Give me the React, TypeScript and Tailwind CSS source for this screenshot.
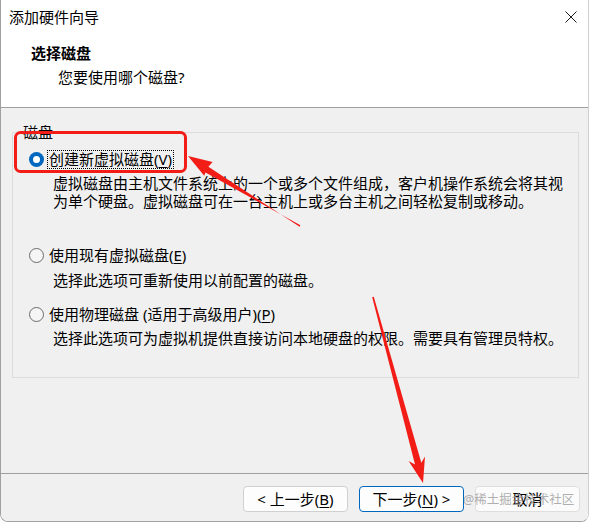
import React from 'react';

function Radio({ checked }: { checked?: boolean }) {
  if (checked) {
    return (
      <span className="w-[15px] h-[15px] rounded-full bg-[#0067c0] flex items-center justify-center shrink-0">
        <span className="w-[7px] h-[7px] rounded-full bg-white" />
      </span>
    );
  }
  return <span className="w-[15px] h-[15px] rounded-full border border-[#6b6b6b] bg-[#f5f5f5] shrink-0" />;
}

function Key({ k }: { k: string }) {
  return <span className="underline underline-offset-[2px] decoration-1">{k}</span>;
}

function Annotations() {
  return (
    <svg className="absolute inset-0 pointer-events-none" width="589" height="522" viewBox="0 0 589 522">
      <rect x="15.5" y="132.5" width="170" height="39" rx="5" fill="none" stroke="#f31d18" strokeWidth="3" />
      {/* arrow pointing at the first option */}
      <polygon
        fill="#f31d18"
        points="300.4,225.3 205.5,172.4 204.2,175.8 188,156 212.6,161.9 208.4,166.8 299.6,226.7"
      />
      {/* arrow pointing at the next button */}
      <polygon
        fill="#f31d18"
        points="372.2,297.2 415.0,464.4 408.6,461.0 423,483 425.0,456.6 421.3,462.7 373.8,296.8"
      />
    </svg>
  );
}

export default function App() {
  return (
    <div className="relative w-[589px] h-[522px] overflow-hidden bg-white text-black font-['Noto_Sans','Noto_Sans_CJK_SC',sans-serif] text-[15px]">
      <div className="h-[522px] flex flex-col border-l border-r border-b border-l-[#a0a0a0] border-r-[#cfcfcf] border-b-[#a0a0a0] rounded-b-[8px] overflow-hidden">
        <div className="h-[107px] bg-white shrink-0">
          <div className="h-[34px] flex items-center justify-between pl-[8px] pr-[11px]">
            <span className="leading-[18px]">添加硬件向导</span>
            <svg width="12" height="12" viewBox="0 0 12 12">
              <path d="M0.5 0.5 L11.5 11.5 M11.5 0.5 L0.5 11.5" stroke="#1a1a1a" strokeWidth="1" fill="none" />
            </svg>
          </div>
          <div className="mt-[10px] pl-[30px] leading-[18px] font-bold">选择磁盘</div>
          <div className="mt-[6px] pl-[57px] leading-[18px]">您要使用哪个磁盘?</div>
        </div>

        <div className="flex-1 bg-[#f0f0f0] border-t border-[#a0a0a0]">
          <div className="relative mt-[24px] ml-[11px] w-[567px] h-[246px] border border-[#dcdcdc]">
            <span className="absolute -top-[10px] left-[9px] px-[1px] bg-[#f0f0f0] leading-[18px]">磁盘</span>

            <div className="pt-[14px]">
              <div className="flex items-center h-[24px] pl-[16px] gap-[4px]">
                <Radio checked />
                <span className="px-[1px] leading-[17px] outline outline-1 outline-dotted outline-black">
                  创建新虚拟磁盘(<Key k="V" />)
                </span>
              </div>
              <div className="mt-[3px] pl-[40px] leading-[18px] whitespace-nowrap">
                虚拟磁盘由主机文件系统上的一个或多个文件组成，客户机操作系统会将其视
                <br />
                为单个硬盘。虚拟磁盘可在一台主机上或多台主机之间轻松复制或移动。
              </div>

              <div className="mt-[33px] flex items-center h-[24px] pl-[16px] gap-[5px]">
                <Radio />
                <span className="leading-[18px]">
                  使用现有虚拟磁盘(<Key k="E" />)
                </span>
              </div>
              <div className="mt-[4px] pl-[40px] leading-[18px] whitespace-nowrap">
                选择此选项可重新使用以前配置的磁盘。
              </div>

              <div className="mt-[13px] flex items-center h-[24px] pl-[16px] gap-[5px]">
                <Radio />
                <span className="leading-[18px]">
                  使用物理磁盘 (适用于高级用户)(<Key k="P" />)
                </span>
              </div>
              <div className="mt-[3px] pl-[40px] leading-[18px] whitespace-nowrap">
                选择此选项可为虚拟机提供直接访问本地硬盘的权限。需要具有管理员特权。
              </div>
            </div>
          </div>
        </div>

        <div className="h-[48px] shrink-0 bg-[#f0f0f0] border-t border-[#a0a0a0] flex justify-end items-start pt-[12px] pr-[8px] gap-[11px]">
          <button className="w-[105px] h-[26px] rounded-[4px] border border-[#d0d0d0] bg-[#fdfdfd] leading-[24px]">
            &lt; 上一步(<Key k="B" />)
          </button>
          <button className="w-[105px] h-[26px] rounded-[4px] border border-[#0067c0] bg-[#fdfdfd] leading-[24px]">
            下一步(<Key k="N" />) &gt;
          </button>
          <button className="w-[105px] h-[26px] rounded-[4px] border border-[#dedede] bg-[#fbfbfb] leading-[24px]">
            取消
          </button>
        </div>
      </div>

      <span className="absolute left-[463px] top-[491px] text-[12.5px] leading-[18px] text-[#9a9a9a]/80 whitespace-nowrap">
        @稀土掘金技术社区
      </span>

      <Annotations />
    </div>
  );
}
